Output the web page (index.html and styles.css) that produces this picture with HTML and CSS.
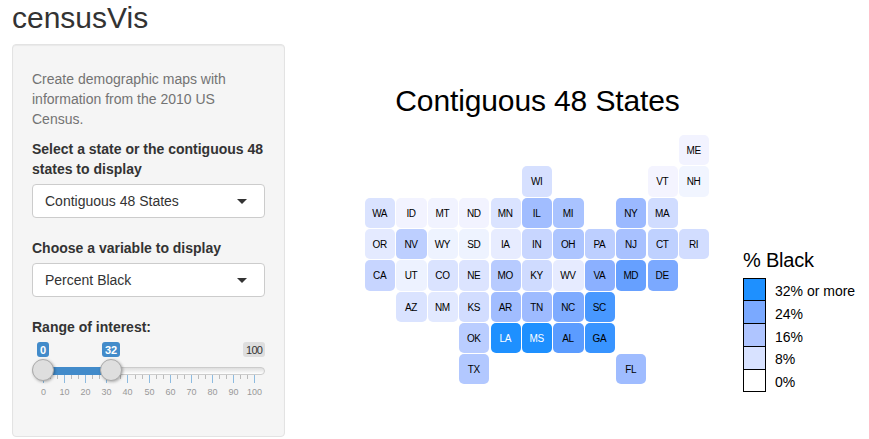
FILE: index.html
```
<!DOCTYPE html>
<html lang="en">
<head>
<meta charset="utf-8">
<title>censusVis</title>
<link rel="stylesheet" href="styles.css">
</head>
<body>
<h1>censusVis</h1>
<div class="layout">
  <form class="well">
    <p class="help">Create demographic maps with information from the 2010 US Census.</p>
    <div class="field">
      <div class="label">Select a state or the contiguous 48 states to display</div>
      <div class="select"><span>Contiguous 48 States</span><i class="caret"></i></div>
    </div>
    <div class="field">
      <div class="label">Choose a variable to display</div>
      <div class="select"><span>Percent Black</span><i class="caret"></i></div>
    </div>
    <div class="label range-label">Range of interest:</div>
    <div class="slider">
      <div class="track"></div>
      <div class="bar"></div>
      <span class="handle from"></span>
      <span class="handle to"></span>
      <span class="tag tag-from">0</span>
      <span class="tag tag-to">32</span>
      <span class="tag tag-max">100</span>
      <div class="ticks" id="ticks"></div>
    </div>
  </form>
  <main class="plot">
    <h2>Contiguous 48 States</h2>
    <div class="map" id="map"></div>
  </main>
  <aside class="legend">
    <h3>% Black</h3>
    <div class="key"><i class="k32"></i><span>32% or more</span></div>
    <div class="key"><i class="k24"></i><span>24%</span></div>
    <div class="key"><i class="k16"></i><span>16%</span></div>
    <div class="key"><i class="k8"></i><span>8%</span></div>
    <div class="key"><i class="k0"></i><span>0%</span></div>
  </aside>
</div>
<script src="app.js"></script>
</body>
</html>
```
FILE: styles.css
```
* { box-sizing: border-box; }
body {
  margin: 0;
  height: 439px;
  overflow: hidden;
  background: #fff;
  color: #333;
  font: 14px/20px "Liberation Sans", Arial, sans-serif;
}
h1 { margin: 0; padding: 1px 0 10px 12px; font-size: 30px; font-weight: 400; line-height: 33px; }
h2, h3 { margin: 0; font-weight: 400; color: #000; }
.layout { display: flex; align-items: flex-start; padding-left: 12px; }
.well {
  width: 273px;
  height: 393px;
  padding: 24px 19px 19px;
  border: 1px solid #e3e3e3;
  border-radius: 4px;
  background: #f5f5f5;
  box-shadow: inset 0 1px 1px rgba(0, 0, 0, .05);
}
.help { margin: 0 0 10px; color: #737373; }
.label { margin-bottom: 5px; font-weight: 700; }
.field { margin-bottom: 20px; }
.select {
  display: flex;
  align-items: center;
  justify-content: space-between;
  height: 34px;
  padding: 0 17px 0 12px;
  border: 1px solid #ccc;
  border-radius: 4px;
  background: #fff;
}
.caret { border: 5px solid transparent; border-top-color: #333; border-bottom: 0; }
.range-label { margin-bottom: 0; }
.slider { position: relative; height: 60px; }
.track {
  position: absolute;
  left: 0;
  right: 0;
  top: 30px;
  height: 8px;
  border: 1px solid #ccc;
  border-radius: 8px;
  background: linear-gradient(#dedede, #fff);
}
.bar { position: absolute; left: 11px; top: 30px; width: 68px; height: 8px; background: #428bca; }
.handle {
  position: absolute;
  top: 22px;
  width: 22px;
  height: 22px;
  border: 1px solid #ababab;
  border-radius: 50%;
  background: #dedede;
  box-shadow: 1px 1px 3px rgba(0, 0, 0, .3);
  z-index: 2;
}
.from { left: 0; }
.to { left: 68px; }
.tag {
  position: absolute;
  top: 5px;
  height: 15px;
  padding: 0 3px;
  border-radius: 3px;
  background: #428bca;
  color: #fff;
  font-size: 11px;
  font-weight: 700;
  line-height: 16px;
}
.tag-from { left: 5px; }
.tag-to { left: 70px; }
.tag-max { right: 0; width: 22px; background: #dedede; color: #333; font-weight: 400; letter-spacing: -0.7px; }
.ticks { position: absolute; left: 11px; top: 38px; width: 212px; height: 28px; }
.tick { position: absolute; top: 0; width: 1px; height: 4px; background: #bbb; }
.tick.major { height: 8px; background: #8dbbe0; }
.tick b {
  position: absolute;
  top: 11px;
  left: -15px;
  width: 31px;
  text-align: center;
  font-size: 9px;
  font-weight: 400;
  line-height: 12px;
  color: #999;
}
.plot { width: 345px; margin-left: 80px; padding-top: 39px; }
h2 {
  font-size: 30px;
  line-height: 36px;
  letter-spacing: -0.12px;
  text-align: center;
  white-space: nowrap;
}
.map {
  display: grid;
  grid-template-columns: repeat(11, 30.3px);
  grid-auto-rows: 30.2px;
  gap: 1.15px 1.1px;
  margin-top: 16px;
}
.state {
  display: flex;
  align-items: center;
  justify-content: center;
  padding: 2px 1px 0 0;
  border-radius: 5px;
  color: #000;
  font-size: 10px;
  letter-spacing: -0.4px;
  line-height: 12px;
}
.state.light { color: #fff; }
.legend { margin-left: 33px; padding-top: 203px; color: #000; }
h3 { margin-bottom: 6px; padding-top: 1px; font-size: 20px; line-height: 24px; letter-spacing: -0.2px; white-space: nowrap; }
.key { display: flex; height: 22.8px; align-items: center; }
.key i { width: 23px; height: 23.8px; margin-right: 9px; border: 1px solid #000; }
.key span { padding-top: 3px; white-space: nowrap; }
.k32 { background: #1e90ff; }
.k24 { background: #7aa9ff; }
.k16 { background: #afc5ff; }
.k8 { background: #d8e2ff; }
.k0 { background: #fff; }
```
FILE: app.js
```
// Each entry: state, column, row, fill.
const states = [
  "ME 11 1 f2f3ff", "WI 6 2 d6e0ff", "VT 10 2 f4f4ff", "NH 11 2 f1f5ff",
  "WA 1 3 dae3ff", "ID 2 3 f2f3ff", "MT 3 3 f1f3ff", "ND 4 3 f2f3ff", "MN 5 3 dae3ff", "IL 6 3 a1bdff", "MI 7 3 a9c3ff", "NY 9 3 9bb9ff", "MA 10 3 d0dcff",
  "OR 1 4 e4eaff", "NV 2 4 bdcfff", "WY 3 4 eef3ff", "SD 4 4 eef3ff", "IA 5 4 e7ecff", "IN 6 4 c8d6ff", "OH 7 4 adc5ff", "PA 8 4 bdcfff", "NJ 9 4 a8c1ff", "CT 10 4 bfd1ff", "RI 11 4 d2ddff",
  "CA 1 5 c7d5ff", "UT 2 5 edf2ff", "CO 3 5 dae3ff", "NE 4 5 dce4ff", "MO 5 5 b7cbff", "KY 6 5 cfdbff", "WV 7 5 e6ebff", "VA 8 5 8bb0ff", "MD 9 5 66a0ff", "DE 10 5 7ba9ff",
  "AZ 2 6 dae3ff", "NM 3 6 e2e9ff", "KS 4 6 d2ddff", "AR 5 6 a1bdff", "TN 6 6 9ebbff", "NC 7 6 7eabff", "SC 8 6 4898ff",
  "OK 4 7 bacdff", "LA 5 7 1e90ff", "MS 6 7 1e90ff", "AL 7 7 5b9cff", "GA 8 7 3894ff",
  "TX 4 8 b2c8ff", "FL 9 8 9fbcff"
];
const map = document.getElementById("map");
for (const entry of states) {
  const [name, col, row, fill] = entry.split(" ");
  const el = document.createElement("div");
  el.className = name === "LA" || name === "MS" ? "state light" : "state";
  el.style.gridColumn = col;
  el.style.gridRow = row;
  el.style.background = "#" + fill;
  el.textContent = name;
  map.append(el);
}

// Major tick every ten units with two minor ticks in between.
const ticks = document.getElementById("ticks");
for (let i = 0; i <= 30; i++) {
  const tick = document.createElement("span");
  tick.className = i % 3 ? "tick" : "tick major";
  tick.style.left = Math.round(i * 7.04) + "px";
  if (i % 3 === 0) {
    const text = document.createElement("b");
    text.textContent = i / 3 * 10;
    tick.append(text);
  }
  ticks.append(tick);
}
```
